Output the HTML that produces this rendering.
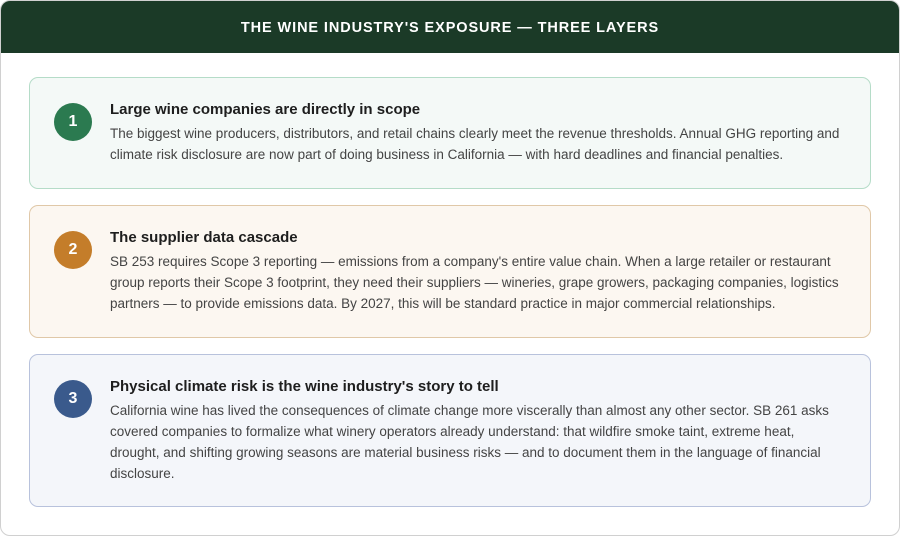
<!DOCTYPE html>
<html><head><style>
*{box-sizing:border-box;margin:0;padding:0}
body{width:900px;height:536px;background:#fff;font-family:"Liberation Sans",sans-serif;overflow:hidden}
.wrap{position:absolute;left:0;top:0;width:900px;height:536px;border:1px solid #d0d0d0;border-radius:10px;overflow:hidden;background:#fff}
.hd{height:52px;padding-top:1px;background:#1b3a27;color:#fff;font-weight:bold;font-size:14.5px;letter-spacing:0.9px;text-align:center;line-height:52px}
.card{position:absolute;left:28px;width:842px;border-radius:9px;border:1px solid}
.num{position:absolute;left:24px;width:38px;height:38px;border-radius:50%;color:#fff;font-weight:bold;font-size:16px;text-align:center;line-height:38px}
.tx{position:absolute;left:80px;right:24px}
.t{font-weight:bold;font-size:15px;color:#1e1e1e;margin-bottom:4px;line-height:18px}
.b{font-size:13.5px;color:#444;line-height:21px}
</style></head><body><div class="wrap">
<div class="hd">THE WINE INDUSTRY'S EXPOSURE — THREE LAYERS</div>
<div class="card" style="top:76px;height:112px;background:#f4f9f7;border-color:#b5dcc8">
<div class="num" style="top:25px;background:#2b7a50">1</div>
<div class="tx" style="top:23px"><div class="t">Large wine companies are directly in scope</div><div class="b">The biggest wine producers, distributors, and retail chains clearly meet the revenue thresholds. Annual GHG reporting and climate risk disclosure are now part of doing business in California — with hard deadlines and financial penalties.</div></div></div>
<div class="card" style="top:204px;height:133px;background:#fcf7f1;border-color:#e0c8a8">
<div class="num" style="top:25px;background:#c47d2a">2</div>
<div class="tx" style="top:23px"><div class="t">The supplier data cascade</div><div class="b">SB 253 requires Scope 3 reporting — emissions from a company's entire value chain. When a large retailer or restaurant group reports their Scope 3 footprint, they need their suppliers — wineries, grape growers, packaging companies, logistics partners — to provide emissions data. By 2027, this will be standard practice in major commercial relationships.</div></div></div>
<div class="card" style="top:353px;height:153px;background:#f4f6fa;border-color:#b8c2dc">
<div class="num" style="top:25px;background:#3a5a8c">3</div>
<div class="tx" style="top:23px"><div class="t">Physical climate risk is the wine industry's story to tell</div><div class="b">California wine has lived the consequences of climate change more viscerally than almost any other sector. SB 261 asks covered companies to formalize what winery operators already understand: that wildfire smoke taint, extreme heat, drought, and shifting growing seasons are material business risks — and to document them in the language of financial disclosure.</div></div></div>
</div></body></html>
